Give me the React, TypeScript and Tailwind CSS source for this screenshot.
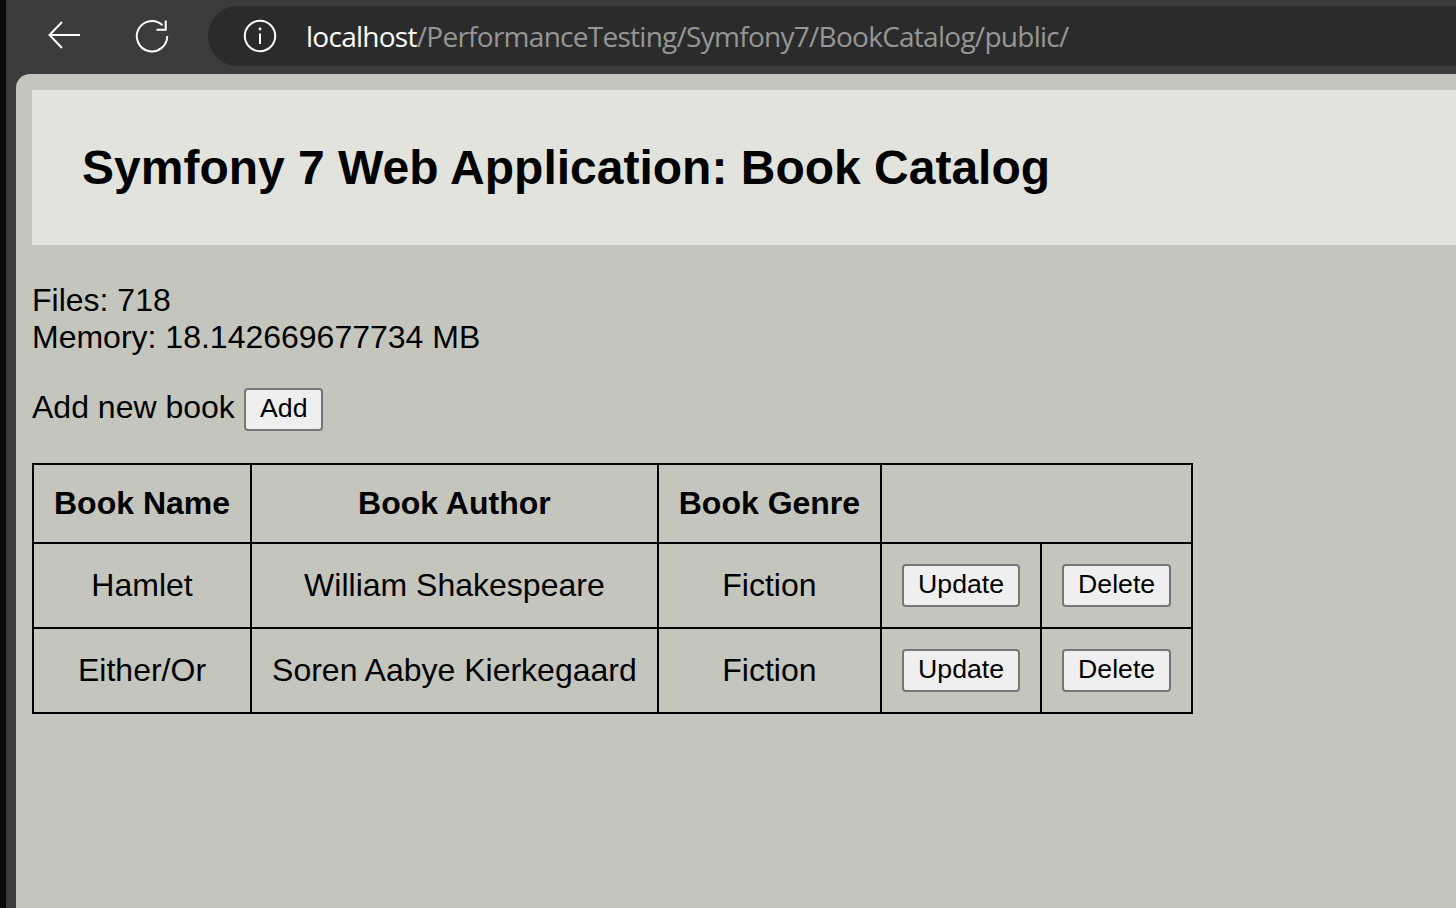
export default function App() {
  const rows = [
    ["Hamlet", "William Shakespeare", "Fiction"],
    ["Either/Or", "Soren Aabye Kierkegaard", "Fiction"],
  ];
  const btn = "inline-block h-[43px] pb-[4px] bg-[#efefef] border-2 border-[#767676] rounded-[4px] text-[26.67px] leading-[30px] text-black align-middle";
  const cell = "border-2 border-black px-[20px] py-[20px] text-center font-normal";
  return (
    <div className="w-[1456px] h-[908px] overflow-hidden flex bg-[#3b3b3b] font-['Liberation_Sans',Arial,sans-serif]">
      <div className="w-[6px] shrink-0 bg-[#0a0a0a]" />
      <div className="flex-1 min-w-0 flex flex-col">
        <div className="h-[74px] shrink-0 flex items-start pt-[6px]">
          <div className="w-[202px] h-[60px] shrink-0 flex items-center">
            <svg className="ml-[42px] mb-[2px]" width="32" height="28" viewBox="0 0 32 28" fill="none" stroke="white" strokeWidth="2">
              <path d="M32 14H1.5M14 1L1.5 14L14 27" />
            </svg>
            <svg className="ml-[55px]" width="34" height="34" viewBox="0 0 34 34" fill="none" stroke="white" strokeWidth="2">
              <path d="M27.5 6.2A15.2 15.2 0 1 0 32.2 17" />
              <path d="M30.7 1.5V10.7H21.5" />
            </svg>
          </div>
          <div className="flex-1 h-[60px] rounded-l-[30px] bg-[#2b2b2b] flex items-center pl-[35px] whitespace-nowrap overflow-hidden">
            <svg width="34" height="34" viewBox="0 0 34 34" fill="none" stroke="white" strokeWidth="2" className="shrink-0">
              <circle cx="17" cy="17" r="15.2" />
              <path d="M17 14.5V25" />
              <circle cx="17" cy="10" r="1.4" fill="white" stroke="none" />
            </svg>
            <span className="ml-[29px] text-[28px] leading-[60px] tracking-[-0.73px] font-['Open_Sans',sans-serif] text-white">
              localhost<span className="text-[#969696]">/PerformanceTesting/Symfony7/BookCatalog/public/</span>
            </span>
          </div>
        </div>
        <div className="flex-1 min-h-0 ml-[10px] rounded-tl-[14px] bg-[#c4c5bc] pt-[16px] pl-[16px] text-black text-[32px] leading-[37px]">
          <div className="h-[155px] bg-[#e2e3dd] pl-[50px] flex items-center">
            <h1 className="text-[48px] leading-[55px] font-bold">Symfony 7 Web Application: Book Catalog</h1>
          </div>
          <p className="mt-[37px]">Files: 718<br />Memory: 18.142669677734 MB</p>
          <div className="mt-[32px] flex items-center h-[43px]">
            <span className="-mt-[4px]">Add new book</span>
            <button className={btn + " ml-[9.5px] w-[79px]"}>Add</button>
          </div>
          <table className="mt-[32px] border-collapse border-2 border-black">
            <thead>
              <tr>
                <th className={cell + " !font-bold"}>Book Name</th>
                <th className={cell + " !font-bold"}>Book Author</th>
                <th className={cell + " !font-bold"}>Book Genre</th>
                <th className={cell} colSpan={2} />
              </tr>
            </thead>
            <tbody>
              {rows.map((r) => (
                <tr key={r[0]}>
                  {r.map((c, i) => (
                    <td key={i} className={cell}>{c}</td>
                  ))}
                  <td className={cell}><button className={btn + " px-[14px]"}>Update</button></td>
                  <td className={cell}><button className={btn + " px-[14px]"}>Delete</button></td>
                </tr>
              ))}
            </tbody>
          </table>
        </div>
      </div>
    </div>
  );
}
